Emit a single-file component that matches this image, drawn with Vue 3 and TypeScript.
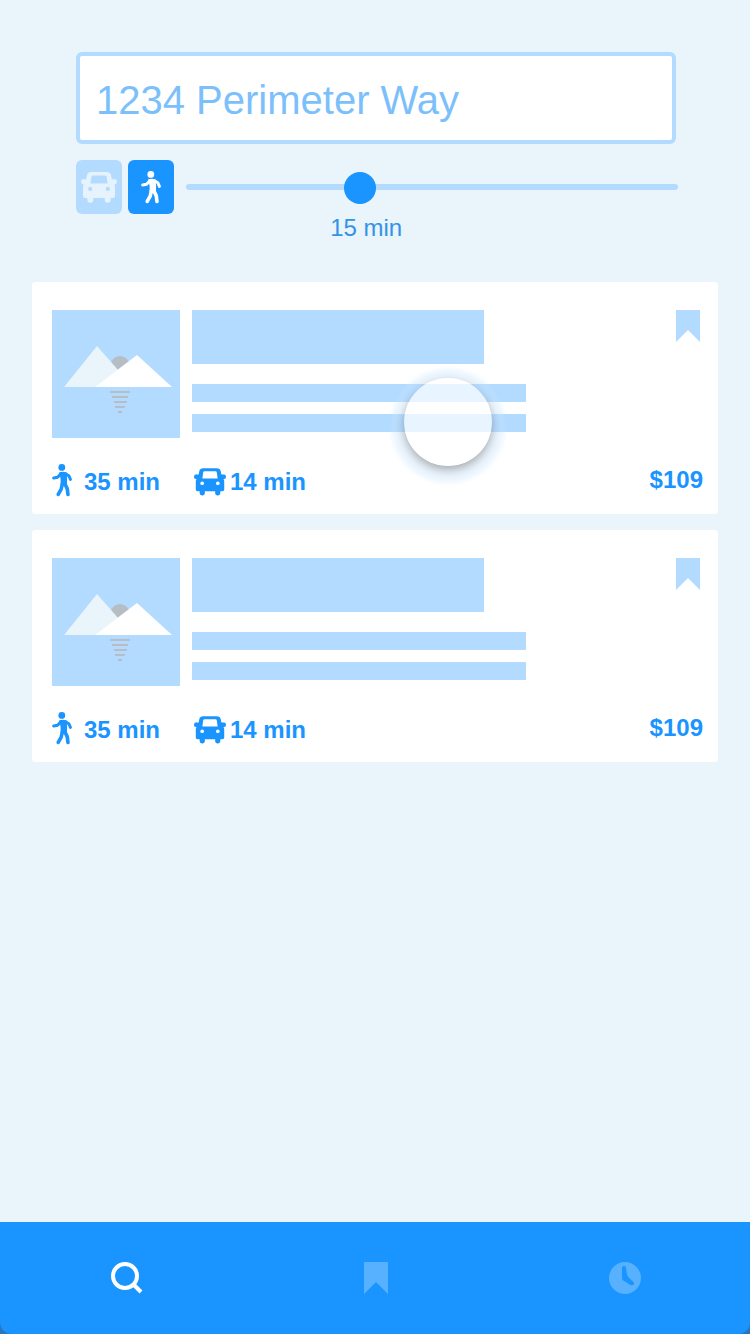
<script setup lang="ts">
import { computed, ref } from 'vue'

type Mode = 'car' | 'walk'
type Tab = 'search' | 'saved' | 'recent'

interface Listing {
  id: number
  walk: number
  drive: number
  price: number
}

const address = ref('1234 Perimeter Way')
const mode = ref<Mode>('walk')
const tab = ref<Tab>('search')

const minMinutes = 4
const maxMinutes = 36
const minutes = ref(15)
const progress = computed(() => (minutes.value - minMinutes) / (maxMinutes - minMinutes))

const listings: Listing[] = [
  { id: 1, walk: 35, drive: 14, price: 109 },
  { id: 2, walk: 35, drive: 14, price: 109 },
]
</script>

<template>
  <div class="app">
    <svg class="defs" aria-hidden="true">
      <symbol id="car" viewBox="0 0 36 31">
        <path
          fill="currentColor"
          fill-rule="evenodd"
          d="M10.5 0H25.5Q29.4 0 30 3.2L30.8 7.2H34Q36 7.2 36 9.6Q36 12.2 34 12.2H33.2Q34 13.4 34 15V24Q34 26 32 26H29.6V28Q29.6 30.8 26.7 30.8Q23.8 30.8 23.8 28V26H12.2V28Q12.2 30.8 9.3 30.8Q6.4 30.8 6.4 28V26H4Q2 26 2 24V15Q2 13.4 2.8 12.2H2Q0 12.2 0 9.6Q0 7.2 2 7.2H5.2L6 3.2Q6.6 0 10.5 0ZM12 3.4Q10.6 3.4 10.4 4.6L9.4 11.6H26.6L25.6 4.6Q25.4 3.4 24 3.4ZM9.2 14.8A2.1 2.1 0 1 0 9.2 19A2.1 2.1 0 1 0 9.2 14.8ZM26.8 14.8A2.1 2.1 0 1 0 26.8 19A2.1 2.1 0 1 0 26.8 14.8Z"
        />
      </symbol>
      <symbol id="walk" viewBox="0 0 20 33">
        <circle cx="9.8" cy="3.4" r="3.4" fill="currentColor" />
        <path d="M7 8.4Q10.5 7 14.4 8.4Q15.6 14 15 20.4L8.4 20.8Q9.4 15 7 8.4Z" fill="currentColor" />
        <g fill="none" stroke="currentColor" stroke-linecap="round" stroke-linejoin="round">
          <path stroke-width="3" d="M9 9.6L5.6 13.2L1.7 14M13.6 9.8L17 12L18.4 15.4" />
          <path stroke-width="3.6" d="M10.4 19.6L9.2 25.2L6.2 30.4M12.8 19.6L15.2 24.6L16 30.4" />
        </g>
      </symbol>
      <symbol id="bookmark" viewBox="0 0 24 32">
        <path d="M0 0H24V32L12 20L0 32Z" fill="currentColor" />
      </symbol>
    </svg>

    <header class="header">
      <input v-model="address" class="address" type="text" aria-label="Address" />
      <div class="travel">
        <div class="modes">
          <button
            type="button"
            class="mode"
            :class="{ active: mode === 'car' }"
            aria-label="Drive"
            @click="mode = 'car'"
          >
            <svg class="mode-car"><use href="#car" /></svg>
          </button>
          <button
            type="button"
            class="mode"
            :class="{ active: mode === 'walk' }"
            aria-label="Walk"
            @click="mode = 'walk'"
          >
            <svg class="walk-icon"><use href="#walk" /></svg>
          </button>
        </div>
        <div class="duration">
          <input
            id="minutes"
            v-model.number="minutes"
            class="slider"
            type="range"
            :min="minMinutes"
            :max="maxMinutes"
            aria-label="Travel time"
          />
          <output
            class="duration-value"
            for="minutes"
            :style="{ marginLeft: `calc((100% - 32px) * ${progress} - 14px)` }"
          >{{ minutes }} min</output>
        </div>
      </div>
    </header>

    <main class="listings">
      <article v-for="(item, index) in listings" :key="item.id" class="card">
        <div class="card-top">
          <svg class="photo" viewBox="0 0 128 128" aria-hidden="true">
            <circle cx="68" cy="55.5" r="9.5" fill="#b6bdc4" />
            <path d="M12 77L45 36L81 77Z" fill="#e9f4fb" />
            <path d="M43 77L85 45L120 77Z" fill="#fff" />
            <path
              d="M58 82H78M60 87H76M62 92H75M63 97H73M66 102H70"
              stroke="#b6bdc4"
              stroke-width="2"
            />
          </svg>
          <div class="summary">
            <div class="bar title"></div>
            <div class="bar line"></div>
            <div class="bar line"></div>
          </div>
          <button type="button" class="save" aria-label="Save">
            <svg class="bookmark-icon"><use href="#bookmark" /></svg>
          </button>
        </div>
        <div class="card-meta">
          <span class="meta walk-time">
            <svg class="walk-icon"><use href="#walk" /></svg>{{ item.walk }} min
          </span>
          <span class="meta drive-time">
            <svg class="car-icon"><use href="#car" /></svg>{{ item.drive }} min
          </span>
          <span class="price">${{ item.price }}</span>
        </div>
        <span v-if="index === 0" class="touch" aria-hidden="true"></span>
      </article>
    </main>

    <div class="nav-base">
      <nav class="nav">
        <button
          type="button"
          class="tab"
          :class="{ active: tab === 'search' }"
          aria-label="Search"
          @click="tab = 'search'"
        >
          <svg class="tab-icon" viewBox="0 0 32 32">
            <g fill="none" stroke="currentColor" stroke-width="4">
              <circle cx="14" cy="14" r="12" />
              <path d="M22.5 22.5L30 30" />
            </g>
          </svg>
        </button>
        <button
          type="button"
          class="tab"
          :class="{ active: tab === 'saved' }"
          aria-label="Saved"
          @click="tab = 'saved'"
        >
          <svg class="bookmark-icon"><use href="#bookmark" /></svg>
        </button>
        <button
          type="button"
          class="tab"
          :class="{ active: tab === 'recent' }"
          aria-label="Recent"
          @click="tab = 'recent'"
        >
          <svg class="tab-icon" viewBox="0 0 32 32">
            <path
              fill="currentColor"
              fill-rule="evenodd"
              d="M16 0A16 16 0 1 1 16 32A16 16 0 1 1 16 0ZM15 4Q13 4 13 6V16.5Q13 17.5 14 18.3L21.5 23Q24 24 25 22Q25.3 21 24.4 20L19.4 15.2Q18.4 13.8 17.8 11.5L17 6Q17 4 15 4Z"
            />
          </svg>
        </button>
      </nav>
    </div>
  </div>
</template>

<style>
body {
  background: #eaf4fb;
}
</style>

<style scoped>
.app {
  display: flex;
  flex-direction: column;
  min-height: 100vh;
  background: #eaf4fb;
  color: #1a94ff;
  font-family: "Liberation Sans", Arial, sans-serif;
}

.app *,
.app {
  box-sizing: border-box;
}

.defs {
  position: absolute;
  width: 0;
  height: 0;
}

svg {
  display: block;
}

button {
  padding: 0;
  border: 0;
  background: none;
  color: inherit;
  cursor: pointer;
}

.header {
  padding: 52px 72px 0 76px;
}

.address {
  display: block;
  width: calc(100% - 2px);
  height: 92px;
  padding: 4px 16px 0;
  border: 4px solid #b3dbff;
  border-radius: 6px;
  outline: none;
  background: #fff;
  color: #7cc0fb;
  font: 40px "Liberation Sans", Arial, sans-serif;
}

.travel {
  display: flex;
  gap: 12px;
  margin-top: 16px;
}

.modes {
  display: flex;
  gap: 6px;
}

.mode {
  display: grid;
  place-items: center;
  width: 46px;
  height: 54px;
  border-radius: 6px;
  background: #b3dbff;
  color: #e6f3fd;
}

.mode.active {
  background: #1a94ff;
  color: #fff;
}

.mode-car {
  width: 36px;
  height: 31px;
}

.walk-icon {
  width: 20px;
  height: 33px;
}

.duration {
  flex: 1;
  padding-top: 11px;
}

.slider {
  display: block;
  width: 100%;
  height: 32px;
  margin: 0;
  appearance: none;
  background: none;
}

.slider::-webkit-slider-runnable-track {
  height: 6px;
  border-radius: 3px;
  background: #b3dbff;
}

.slider::-webkit-slider-thumb {
  width: 32px;
  height: 32px;
  margin-top: -12px;
  appearance: none;
  border-radius: 50%;
  background: #1a94ff;
}

.duration-value {
  display: block;
  margin-top: 12px;
  color: #3393e6;
  font-size: 24px;
  line-height: 26px;
  white-space: nowrap;
}

.listings {
  display: flex;
  flex: 1;
  flex-direction: column;
  gap: 16px;
  padding: 41px 32px 32px;
}

.card {
  position: relative;
  padding: 28px 18px 14px 20px;
  border-radius: 3px;
  background: #fff;
}

.card-top {
  display: flex;
  align-items: flex-start;
  gap: 12px;
}

.photo {
  flex: none;
  width: 128px;
  height: 128px;
  background: #b3dbff;
}

.summary {
  flex: 1;
}

.bar {
  background: #b3dbff;
}

.title {
  width: 292px;
  max-width: 100%;
  height: 54px;
  margin-bottom: 20px;
}

.line {
  width: 334px;
  max-width: 100%;
  height: 18px;
}

.line + .line {
  margin-top: 12px;
}

.save {
  color: #b3dbff;
}

.bookmark-icon {
  width: 24px;
  height: 32px;
}

.card-meta {
  display: flex;
  align-items: flex-start;
  margin-top: 26px;
  font-size: 24px;
  font-weight: 700;
  line-height: 36px;
}

.meta {
  display: flex;
  align-items: center;
}

.walk-time {
  align-items: flex-start;
  gap: 12px;
  width: 142px;
}

.drive-time {
  gap: 4px;
}

.car-icon {
  width: 32px;
  height: 28px;
}

.price {
  margin-right: -3px;
  margin-left: auto;
  line-height: 32px;
}

.touch {
  position: absolute;
  top: 96px;
  left: 372px;
  width: 88px;
  height: 88px;
  border-radius: 50%;
  background: rgba(255, 255, 255, 0.7);
  box-shadow:
    0 4px 10px rgba(60, 60, 60, 0.4),
    0 4px 4px 13px rgba(200, 230, 255, 0.35);
  pointer-events: none;
}

.nav-base {
  background: #2a76bd;
}

.nav {
  display: grid;
  grid-template-columns: repeat(3, 1fr);
  height: 112px;
  padding-left: 2px;
  border-radius: 0 0 12px 12px;
  background: #1a94ff;
}

.tab {
  display: grid;
  place-items: center;
  color: #57b1ff;
}

.tab.active {
  color: #fff;
}

.tab-icon {
  width: 32px;
  height: 32px;
}
</style>
